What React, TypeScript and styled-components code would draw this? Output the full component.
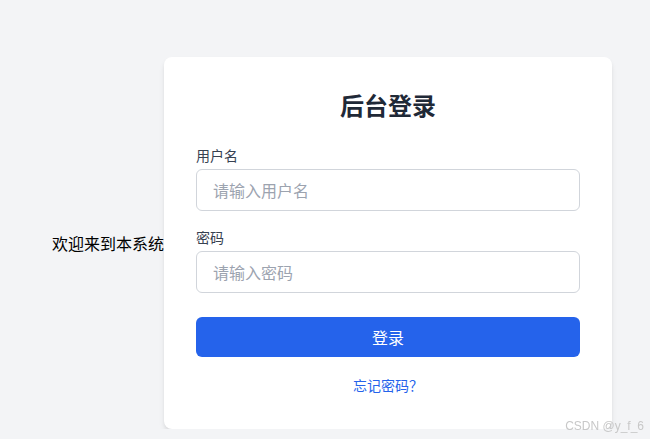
import React from 'react';
import styled, { createGlobalStyle } from 'styled-components';

const GlobalStyle = createGlobalStyle`
  * { box-sizing: border-box; }
  body {
    margin: 0;
    background: #f3f4f6;
    font-family: "Noto Sans CJK SC", "Noto Sans", sans-serif;
  }
`;

export default function App() {
  return (
    <>
      <GlobalStyle />
      <Page>
        <Welcome>欢迎来到本系统</Welcome>
        <Card>
          <Title>后台登录</Title>
          <Field>
            <Label>用户名</Label>
            <Input placeholder="请输入用户名" />
          </Field>
          <Field>
            <Label>密码</Label>
            <Input type="password" placeholder="请输入密码" />
          </Field>
          <Button>登录</Button>
          <Forgot href="#">忘记密码？</Forgot>
        </Card>
      </Page>
      <Watermark>CSDN @y_f_6</Watermark>
    </>
  );
}

const Page = styled.div`
  display: flex;
  align-items: center;
  justify-content: center;
  padding: 57px 0 0 14px;
`;

const Welcome = styled.div`
  font-size: 16px;
  color: #000;
  white-space: nowrap;
`;

const Card = styled.div`
  width: 448px;
  background: #fff;
  border-radius: 8px;
  box-shadow: 0 4px 6px -1px rgba(0, 0, 0, 0.1), 0 2px 4px -1px rgba(0, 0, 0, 0.06);
  padding: 32px 32px 34px;
  display: flex;
  flex-direction: column;
`;

const Title = styled.h2`
  margin: 0 0 24px;
  text-align: center;
  font-size: 24px;
  line-height: 32px;
  font-weight: 700;
  color: #1f2937;
`;

const Field = styled.div`
  display: flex;
  flex-direction: column;
  gap: 4px;
  margin-bottom: 16px;
`;

const Label = styled.label`
  font-size: 14px;
  line-height: 20px;
  color: #374151;
`;

const Input = styled.input`
  height: 42px;
  border: 1px solid #d1d5db;
  border-radius: 6px;
  padding: 0 16px;
  font-size: 16px;
  font-family: inherit;
  color: #111827;
  outline: none;
  &::placeholder {
    color: #9ca3af;
  }
`;

const Button = styled.button`
  margin-top: 8px;
  height: 40px;
  border: none;
  border-radius: 6px;
  background: #2563eb;
  color: #fff;
  font-size: 16px;
  font-family: inherit;
  cursor: pointer;
`;

const Forgot = styled.a`
  margin-top: 18px;
  align-self: center;
  font-size: 14px;
  line-height: 20px;
  color: #2563eb;
  text-decoration: none;
`;

const Watermark = styled.div`
  position: fixed;
  right: 6px;
  bottom: 6px;
  font-size: 12px;
  color: #c8c8c8;
  font-family: "Liberation Sans", sans-serif;
`;
